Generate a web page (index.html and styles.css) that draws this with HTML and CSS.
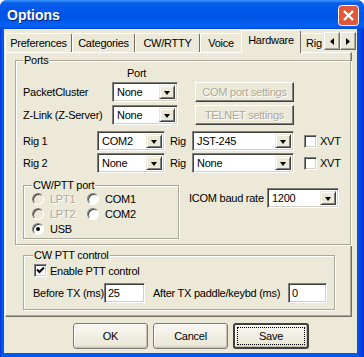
FILE: index.html
```html
<!DOCTYPE html>
<html lang="en">
<head>
    <meta charset="UTF-8">
    <title>Options</title>
    <link rel="stylesheet" href="styles.css">
</head>
<body>
    <div class="window">
        <div class="titlebar">
            <span class="title">Options</span>
            <span class="close">
                <svg width="21" height="21" viewBox="0 0 21 21">
                    <rect x="0.5" y="0.5" width="20" height="20" rx="3" fill="#e0573a" stroke="#fff"/>
                    <path d="M6 6 L15 15 M15 6 L6 15" stroke="#fff" stroke-width="2.4"/>
                </svg>
            </span>
        </div>

        <div class="client">
            <div class="tabs">
                <span class="tab w-pref">Preferences</span>
                <span class="tab w-cat">Categories</span>
                <span class="tab w-cw">CW/RTTY</span>
                <span class="tab w-voice">Voice</span>
                <span class="tab active">Hardware</span>
                <span class="tab w-rig">Rig Control</span>
                <span class="spin">
                    <span class="spin-btn"><svg width="4" height="7" viewBox="0 0 4 7"><path d="M4 0 L0 3.5 L4 7 Z" fill="#000"/></svg></span>
                    <span class="spin-btn"><svg width="4" height="7" viewBox="0 0 4 7"><path d="M0 0 L4 3.5 L0 7 Z" fill="#000"/></svg></span>
                </span>
            </div>

            <div class="panel">
                <fieldset class="group ports">
                    <legend>Ports</legend>
                    <div class="port-head">Port</div>

                    <div class="row r-packet">
                        <span class="lbl w-name">PacketCluster</span>
                        <span class="combo w-port"><span class="val">None</span><span class="drop"></span></span>
                        <span class="btn disabled w-set">COM port settings</span>
                    </div>
                    <div class="row r-zlink">
                        <span class="lbl w-name">Z-Link (Z-Server)</span>
                        <span class="combo w-port"><span class="val">None</span><span class="drop"></span></span>
                        <span class="btn disabled w-set">TELNET settings</span>
                    </div>
                    <div class="row r-rig1">
                        <span class="lbl w-rigname">Rig 1</span>
                        <span class="combo w-com"><span class="val">COM2</span><span class="drop"></span></span>
                        <span class="lbl w-rigword">Rig</span>
                        <span class="combo w-model"><span class="val">JST-245</span><span class="drop"></span></span>
                        <span class="check"></span>
                        <span class="lbl">XVT</span>
                    </div>
                    <div class="row r-rig2">
                        <span class="lbl w-rigname">Rig 2</span>
                        <span class="combo w-com"><span class="val">None</span><span class="drop"></span></span>
                        <span class="lbl w-rigword">Rig</span>
                        <span class="combo w-model"><span class="val">None</span><span class="drop"></span></span>
                        <span class="check"></span>
                        <span class="lbl">XVT</span>
                    </div>

                    <div class="row r-lower">
                        <fieldset class="group cwport">
                            <legend>CW/PTT port</legend>
                            <div class="radios">
                                <span class="radio-item disabled"><span class="radio"></span>LPT1</span>
                                <span class="radio-item"><span class="radio"></span>COM1</span>
                                <span class="radio-item disabled"><span class="radio"></span>LPT2</span>
                                <span class="radio-item"><span class="radio"></span>COM2</span>
                                <span class="radio-item"><span class="radio on"></span>USB</span>
                            </div>
                        </fieldset>
                        <div class="baud">
                            <span class="lbl w-baud">ICOM baud rate</span>
                            <span class="combo w-rate"><span class="val">1200</span><span class="drop"></span></span>
                        </div>
                    </div>
                </fieldset>

                <fieldset class="group ptt">
                    <legend>CW PTT control</legend>
                    <div class="row r-enable">
                        <span class="check checked">
                            <svg width="9" height="9" viewBox="0 0 9 9"><path d="M1 3.5 L3.5 6 L8 1.5" fill="none" stroke="#000" stroke-width="2"/></svg>
                        </span>
                        <span class="lbl">Enable PTT control</span>
                    </div>
                    <div class="row r-delay">
                        <span class="lbl w-before">Before TX (ms)</span>
                        <span class="edit w-before-in">25</span>
                        <span class="lbl w-after">After TX paddle/keybd (ms)</span>
                        <span class="edit w-after-in">0</span>
                    </div>
                </fieldset>
            </div>

            <div class="buttons">
                <span class="btn push">OK</span>
                <span class="btn push">Cancel</span>
                <span class="btn push default"><span class="focus">Save</span></span>
            </div>
        </div>
    </div>
</body>
</html>
```

FILE: styles.css
```css
body {
    margin: 0;
    background: #ffffff;
    font-family: "Liberation Sans", Arial, sans-serif;
    font-size: 11px;
    letter-spacing: -0.25px;
    color: #000;
}

.window {
    width: 364px;
    height: 357px;
    display: flex;
    flex-direction: column;
    background: linear-gradient(to right, #0831d9, #0058ee 2px, #0058ee 98%, #0831d9);
    border-radius: 7px 7px 0 0;
    overflow: hidden;
}

/* title bar */
.titlebar {
    height: 29px;
    flex: none;
    display: flex;
    align-items: center;
    justify-content: space-between;
    padding: 0 5px 0 7px;
    background: linear-gradient(to bottom, #3d95ff 0, #0a5fe8 3px, #0058ee 8px, #0055e5 60%, #0461f5 90%, #0048d8 100%);
}

.title {
    color: #fff;
    font-family: "Liberation Sans", Arial, sans-serif;
    font-weight: bold;
    font-size: 14px;
    letter-spacing: 0;
    text-shadow: 1px 1px 0 #0a1e80;
    margin-top: 1px;
}

.close {
    display: flex;
    margin-top: 1px;
}

/* client area */
.client {
    flex: 1;
    margin: 0 7px 4px 4px;
    background: #ece9d8;
    display: flex;
    flex-direction: column;
}

.tabs {
    height: 22px;
    margin-top: 1px;
    padding-left: 1px;
    display: flex;
    align-items: flex-end;
}

.tab {
    height: 19px;
    line-height: 18px;
    text-align: center;
    border-left: 1px solid #fff;
    border-top: 1px solid #fff;
    border-right: 1px solid #716f64;
    box-sizing: border-box;
    white-space: nowrap;
    overflow: hidden;
    border-radius: 2px 2px 0 0;
}

.w-pref { width: 67px; }
.w-cat { width: 63px; }
.w-cw { width: 65px; }
.w-voice { width: 42px; }

.tab.active {
    width: 60px;
    height: 23px;
    line-height: 19px;
    margin: 0 -1px -1px -1px;
    background: #ece9d8;
    position: relative;
    z-index: 1;
}

.w-rig {
    width: 26px;
    flex: none;
    text-align: left;
    padding-left: 5px;
    border-right: none;
}

.spin {
    display: flex;
    margin-bottom: 2px;
    margin-left: -2px;
}

.spin-btn {
    width: 16px;
    height: 18px;
    box-sizing: border-box;
    background: #ece9d8;
    border: 1px solid;
    border-color: #fff #716f64 #716f64 #fff;
    box-shadow: inset -1px -1px 0 #aca899;
    display: flex;
    align-items: center;
    justify-content: center;
}

/* tab page */
.panel {
    height: 265px;
    margin-left: 1px;
    margin-right: 5px;
    box-sizing: border-box;
    border: 1px solid;
    border-color: #fff #716f64 #716f64 #fff;
    box-shadow: inset -1px -1px 0 #aca899;
    padding: 1px 0 0 9px;
}

.group {
    margin: 0;
    padding: 0 0 0 7px;
    box-sizing: border-box;
    border: 1px solid #aca899;
    box-shadow: 1px 1px 0 #fff, inset 1px 1px 0 #fff;
}

.group legend {
    padding: 0 1px;
    line-height: 13px;
    background: #ece9d8;
}

.ports {
    width: 336px;
    height: 191px;
}

.port-head {
    line-height: 13px;
    padding-left: 104px;
}

.row {
    display: flex;
    align-items: center;
}

.lbl {
    white-space: nowrap;
}

.r-packet { margin-top: 2px; height: 20px; }
.r-zlink { margin-top: 3px; height: 20px; }
.r-rig1 { margin-top: 6px; height: 20px; }
.r-rig2 { margin-top: 2px; height: 20px; }

.w-name { width: 89px; flex: none; }
.w-rigname { width: 74px; flex: none; }
.w-rigword { width: 27px; flex: none; padding-left: 5px; box-sizing: border-box; }

/* combo box */
.combo {
    height: 20px;
    box-sizing: border-box;
    display: flex;
    background: #fff;
    border: 1px solid;
    border-color: #808080 #fff #fff #808080;
    box-shadow: inset 1px 1px 0 #404040, inset -1px -1px 0 #d4d0c8;
    padding: 2px;
    flex: none;
}

.combo .val {
    flex: 1;
    line-height: 14px;
    padding-left: 2px;
}

.combo .drop {
    width: 16px;
    height: 14px;
    box-sizing: border-box;
    background: #ece9d8;
    border: 1px solid;
    border-color: #ece9d8 #404040 #404040 #ece9d8;
    box-shadow: inset 1px 1px 0 #fff, inset -1px -1px 0 #808080;
    position: relative;
}

.combo .drop::after {
    content: "";
    position: absolute;
    left: 4px;
    top: 5px;
    border-left: 3.5px solid transparent;
    border-right: 3.5px solid transparent;
    border-top: 4px solid #000;
}

.w-port { width: 66px; }
.w-com { width: 68px; }
.w-model { width: 102px; }
.w-rate { width: 72px; }

/* buttons */
.btn {
    box-sizing: border-box;
    text-align: center;
    background: #ece9d8;
    border: 1px solid;
    border-color: #fff #404040 #404040 #fff;
    box-shadow: inset -1px -1px 0 #808080;
}

.btn.disabled {
    color: #aca899;
    text-shadow: 1px 1px 0 #fff;
}

.w-set {
    width: 99px;
    height: 20px;
    line-height: 18px;
    margin-left: 17px;
}

/* check box */
.check {
    width: 13px;
    height: 13px;
    box-sizing: border-box;
    background: #fff;
    border: 1px solid;
    border-color: #808080 #fff #fff #808080;
    box-shadow: inset 1px 1px 0 #404040, inset -1px -1px 0 #d4d0c8;
    margin: 0 3px 0 10px;
    display: flex;
    align-items: center;
    justify-content: center;
    flex: none;
}

/* lower part of the ports group */
.r-lower {
    margin-top: 6px;
    align-items: flex-start;
}

.cwport {
    width: 156px;
    height: 60px;
    padding-left: 8px;
}

.radios {
    display: grid;
    grid-template-columns: 55px auto;
    row-gap: 2px;
    margin-top: 0;
}

.radio-item {
    display: flex;
    align-items: center;
    height: 13px;
    white-space: nowrap;
}

.radio-item.disabled {
    color: #aca899;
    text-shadow: 1px 1px 0 #fff;
}

.radio {
    width: 12px;
    height: 12px;
    box-sizing: border-box;
    border-radius: 50%;
    background: #fff;
    border: 1px solid;
    border-color: #808080 #fff #fff #808080;
    box-shadow: inset 1px 1px 0 #404040;
    margin-right: 6px;
    position: relative;
}

.disabled .radio {
    background: #ece9d8;
}

.radio.on::after {
    content: "";
    position: absolute;
    left: 3px;
    top: 3px;
    width: 4px;
    height: 4px;
    border-radius: 50%;
    background: #000;
}

.baud {
    display: flex;
    align-items: center;
    margin: 9px 0 0 10px;
}

.w-baud { width: 78px; flex: none; }

/* PTT group */
.ptt {
    width: 312px;
    height: 61px;
    margin: 4px 0 0 8px;
    padding-left: 9px;
}

.r-enable { margin-top: 2px; height: 13px; }
.r-enable .check { margin-left: 1px; }

.r-delay { margin-top: 6px; height: 20px; }

.w-before { width: 71px; flex: none; }
.w-after { width: 143px; flex: none; padding-left: 8px; box-sizing: border-box; }

.edit {
    height: 20px;
    box-sizing: border-box;
    background: #fff;
    border: 1px solid;
    border-color: #808080 #fff #fff #808080;
    box-shadow: inset 1px 1px 0 #404040, inset -1px -1px 0 #d4d0c8;
    padding: 2px 3px;
    line-height: 14px;
    flex: none;
}

.w-before-in { width: 41px; }
.w-after-in { width: 39px; }

/* dialog buttons */
.buttons {
    display: flex;
    gap: 5px;
    margin: 6px 0 0 69px;
}

.push {
    width: 75px;
    height: 26px;
    line-height: 24px;
    border-radius: 3px;
    border: 1px solid #7a7a7a;
    box-shadow: inset -1px -1px 0 #c8c4b4, inset 1px 1px 0 #fff;
    background: linear-gradient(to bottom, #f8f7f2, #ece9d8 85%, #d6d0c0);
}

.push.default {
    width: 76px;
    border: 2px solid #404040;
    padding: 2px;
    line-height: 18px;
}

.focus {
    display: block;
    border: 1px dotted #000;
    height: 18px;
    box-sizing: border-box;
    line-height: 16px;
}
```
